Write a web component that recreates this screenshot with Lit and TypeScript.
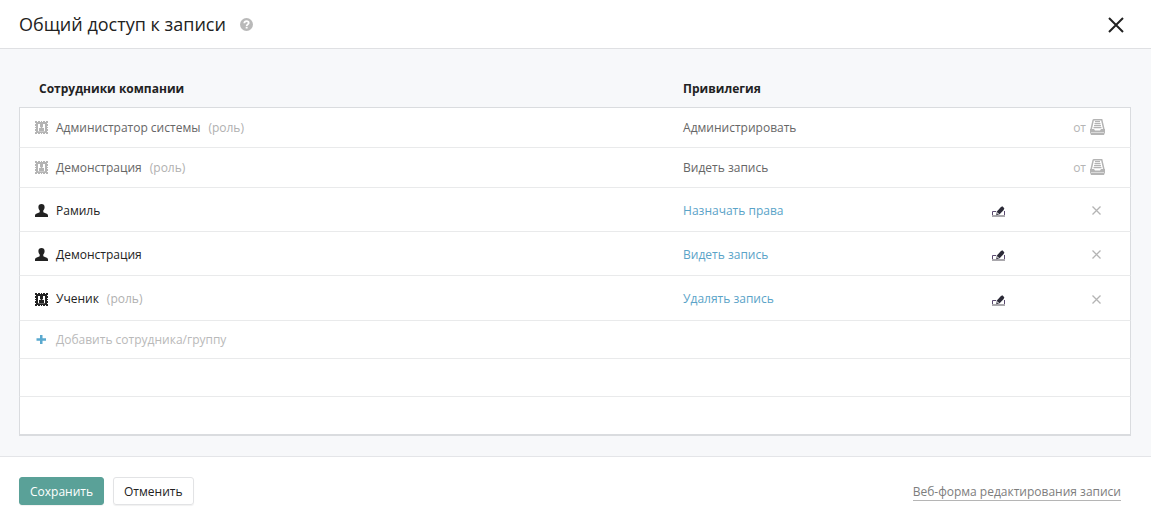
import { LitElement, html, css, svg, nothing } from 'lit';
import { customElement, property, state } from 'lit/decorators.js';
import { classMap } from 'lit/directives/class-map.js';

type Kind = 'role' | 'user';

interface Grant {
  id: number;
  kind: Kind;
  name: string;
  privilege: string;
  inherited: boolean;
}

const GRANTS: Grant[] = [
  { id: 1, kind: 'role', name: 'Администратор системы', privilege: 'Администрировать', inherited: true },
  { id: 2, kind: 'role', name: 'Демонстрация', privilege: 'Видеть запись', inherited: true },
  { id: 3, kind: 'user', name: 'Рамиль', privilege: 'Назначать права', inherited: false },
  { id: 4, kind: 'user', name: 'Демонстрация', privilege: 'Видеть запись', inherited: false },
  { id: 5, kind: 'role', name: 'Ученик', privilege: 'Удалять запись', inherited: false },
];

const ICONS = {
  role: {
    size: [13, 13],
    body: svg`
      <path fill="currentColor" fill-rule="evenodd" d="M0 0h2v1h1V0h2v1h1V0h1v1h1V0h2v1h1V0h2v2h-1v1h1v2h-1v1h1v1h-1v1h1v2h-1v1h1v2h-2v-1h-1v1H8v-1H7v1H6v-1H5v1H3v-1H2v1H0v-2h1v-1H0V8h1V7H0V6h1V5H0V3h1V2H0ZM3 3v7h7V3Z"/>
      <path fill="currentColor" d="M5 3h3v3H7.300v1H9v3H4V7h1.700V6H5Z"/>
      <path fill="#fff" fill-opacity=".5" d="M3 10h7v.6H3Z"/>`,
  },
  user: {
    size: [13, 13],
    body: svg`<path fill="currentColor" d="M6.500 0C8.500 0 9.600 1.300 9.600 3.100c0 1.500-.5 2.700-1.300 3.500v1.500c.3.700 1.500.9 2.700 1.300 1.300.4 2 1 2 2.400V13H0v-1.200c0-1.400.7-2 2-2.400 1.200-.4 2.400-.6 2.700-1.300V6.600C3.900 5.800 3.400 4.600 3.400 3.100 3.400 1.300 4.500 0 6.500 0Z"/>`,
  },
  plus: {
    size: [13, 13],
    body: svg`<path fill="currentColor" d="M5 2h2.500v3.300H11v2.500H7.500V11H5V7.800H1.500V5.300H5Z"/>`,
  },
  record: {
    size: [15, 18],
    body: svg`
      <path fill="none" stroke="currentColor" stroke-width="1.500" d="M3.300 .7h8.400L13.900 10.500M3.300 .7L1.100 10.500"/>
      <path stroke="currentColor" stroke-width="1.200" d="M5 2.700h5M4.500 4.700h6M4 6.700h7M3.500 8.700h8"/>
      <path fill="currentColor" d="M0 10h4l1 1.500h5l1-1.500h4v3.500L14 16H1l-1-2.500Z"/>
      <path stroke="#fff" stroke-opacity=".5" d="M1 13.500h13"/>`,
  },
  edit: {
    size: [14, 11],
    body: svg`
      <path fill="none" stroke="#5b4a70" d="M4 5.500H.5V9M12.500 5v4"/>
      <path fill="#a9a7ac" d="M0 9h13v2H0Z"/>
      <path fill="#2c2b38" d="M8.700 1.200 10.300 .3l2 2-.6 1.700L7.600 8.200 4.200 9.200 4.900 5.600Z"/>
      <path fill="#fff" d="m5.400 6.200 1.600 1.700-1 .3-.9-.9Z"/>`,
  },
  remove: {
    size: [9, 9],
    body: svg`<path stroke="currentColor" stroke-width="1.300" d="m.5.5 8 8m0-8-8 8"/>`,
  },
  close: {
    size: [16, 18],
    body: svg`<path stroke="currentColor" stroke-width="2" d="m1 3 14 14M15 3 1 17"/>`,
  },
  help: {
    size: [13, 13],
    body: svg`
      <circle cx="6.500" cy="6.500" r="6.500" fill="currentColor"/>
      <path fill="none" stroke="#fff" stroke-width="1.800" d="M4.300 5.200c0-1.300.9-2 2.200-2s2.200.7 2.200 1.800c0 1.400-2 1.400-2 3"/>
      <path fill="#fff" d="M5.700 8.800h1.900v1.700H5.700Z"/>`,
  },
};

@customElement('ui-icon')
class UiIcon extends LitElement {
  static styles = css`
    :host { display: inline-flex; flex: none; }
    svg { display: block; }
  `;

  @property() name: keyof typeof ICONS = 'user';

  render() {
    const { size: [w, h], body } = ICONS[this.name];
    return html`<svg width=${w} height=${h} viewBox="0 0 ${w} ${h}" aria-hidden="true">${body}</svg>`;
  }
}

@customElement('app-root')
class AppRoot extends LitElement {
  static styles = css`
    :host {
      display: flex;
      flex-direction: column;
      min-height: 100vh;
      background: #fff;
      color: #222;
      font: 12px/20px Tahoma, "Open Sans", sans-serif;
    }
    button {
      padding: 0;
      border: 0;
      background: none;
      color: inherit;
      font: inherit;
      cursor: pointer;
    }
    a { text-decoration: none; }

    .header {
      display: flex;
      align-items: center;
      height: 48px;
      padding: 0 27px 0 19px;
      border-bottom: 1px solid #dfe0e3;
    }
    .title { margin: 0; font-size: 18px; line-height: 24px; font-weight: 400; }
    .help { display: flex; margin-left: 14px; color: #b9b9b9; }
    .close { display: flex; margin-left: auto; color: #222; }

    .content { flex: 1; padding: 20px 20px 20px 19px; background: #f7f8fa; }
    .grants { width: 100%; table-layout: fixed; border-spacing: 0; }
    .col-name { width: 59%; }
    .col-edit { width: 67px; }
    .col-end { width: 80px; }

    th { height: 36px; padding: 2px 8px 0; text-align: left; font-weight: 700; }
    th:first-child { padding-left: 20px; }
    td { height: 39px; padding: 0 8px; background: #fff; border-bottom: 1px solid #e9eaeb; }
    td:first-child { padding-left: 15px; border-left: 1px solid #dadcdf; }
    td:last-child { padding-right: 25px; border-right: 1px solid #dadcdf; }
    .first td { border-top: 1px solid #dadcdf; }
    .direct td { height: 41px; padding-top: 2px; }
    .direct.group td { height: 42px; }
    .blank td { height: 37px; }
    .blank:last-child td { border-bottom: 2px solid #dadcdf; }

    .who { display: flex; align-items: center; gap: 8px; }
    .inherited { color: #666; }
    .inherited ui-icon { color: #b4b4b4; }
    .role { color: #b0b0b0; }
    .privilege { color: #5aa3c8; }
    .edit, .remove { display: flex; }
    .edit { padding-top: 2px; }
    .remove { margin-left: auto; padding: 4px; color: #b4b4b4; }
    .source { display: flex; justify-content: flex-end; align-items: center; gap: 4px; color: #b4b4b4; }
    .add { display: flex; align-items: center; gap: 8px; color: #b9b9b9; }
    .add ui-icon { color: #5aa9cf; }

    .footer {
      display: flex;
      align-items: center;
      gap: 9px;
      height: 68px;
      padding: 0 30px 0 19px;
      border-top: 1px solid #e4e5e8;
    }
    .btn {
      height: 28px;
      padding: 2px 10px 0;
      border: 1px solid #e2e3e5;
      border-radius: 3px;
      box-shadow: 0 1px 1px rgba(0, 0, 0, 0.06);
    }
    .primary { border-color: #5aa198; background: #5aa198; color: #fff; }
    .webform {
      margin-left: auto;
      padding-top: 2px;
      border-bottom: 1px solid #b5b5b5;
      color: #7d7d7d;
      line-height: 17px;
    }
  `;

  @state() private grants = GRANTS;

  private remove(id: number) {
    this.grants = this.grants.filter((g) => g.id !== id);
  }

  private row(g: Grant, i: number) {
    const classes = {
      first: i === 0,
      inherited: g.inherited,
      direct: !g.inherited,
      group: g.kind === 'role',
    };
    return html`
      <tr class=${classMap(classes)}>
        <td>
          <div class="who">
            <ui-icon name=${g.kind}></ui-icon>
            <span>${g.name}</span>
            ${g.kind === 'role' ? html`<span class="role">(роль)</span>` : nothing}
          </div>
        </td>
        <td>${g.inherited ? g.privilege : html`<a class="privilege" href="#">${g.privilege}</a>`}</td>
        <td>
          ${g.inherited
            ? nothing
            : html`<button class="edit" aria-label="Изменить"><ui-icon name="edit"></ui-icon></button>`}
        </td>
        <td>
          ${g.inherited
            ? html`<div class="source">от <ui-icon name="record"></ui-icon></div>`
            : html`<button class="remove" aria-label="Удалить" @click=${() => this.remove(g.id)}>
                <ui-icon name="remove"></ui-icon>
              </button>`}
        </td>
      </tr>
    `;
  }

  render() {
    return html`
      <header class="header">
        <h1 class="title">Общий доступ к записи</h1>
        <button class="help" aria-label="Справка"><ui-icon name="help"></ui-icon></button>
        <button class="close" aria-label="Закрыть"><ui-icon name="close"></ui-icon></button>
      </header>
      <main class="content">
        <table class="grants">
          <colgroup>
            <col class="col-name" />
            <col />
            <col class="col-edit" />
            <col class="col-end" />
          </colgroup>
          <thead>
            <tr><th>Сотрудники компании</th><th>Привилегия</th><th></th><th></th></tr>
          </thead>
          <tbody>
            ${this.grants.map((g, i) => this.row(g, i))}
            <tr class="blank">
              <td colspan="4">
                <button class="add"><ui-icon name="plus"></ui-icon>Добавить сотрудника/группу</button>
              </td>
            </tr>
            <tr class="blank"><td colspan="4"></td></tr>
            <tr class="blank"><td colspan="4"></td></tr>
          </tbody>
        </table>
      </main>
      <footer class="footer">
        <button class="btn primary">Сохранить</button>
        <button class="btn">Отменить</button>
        <a class="webform" href="#">Веб-форма редактирования записи</a>
      </footer>
    `;
  }
}
